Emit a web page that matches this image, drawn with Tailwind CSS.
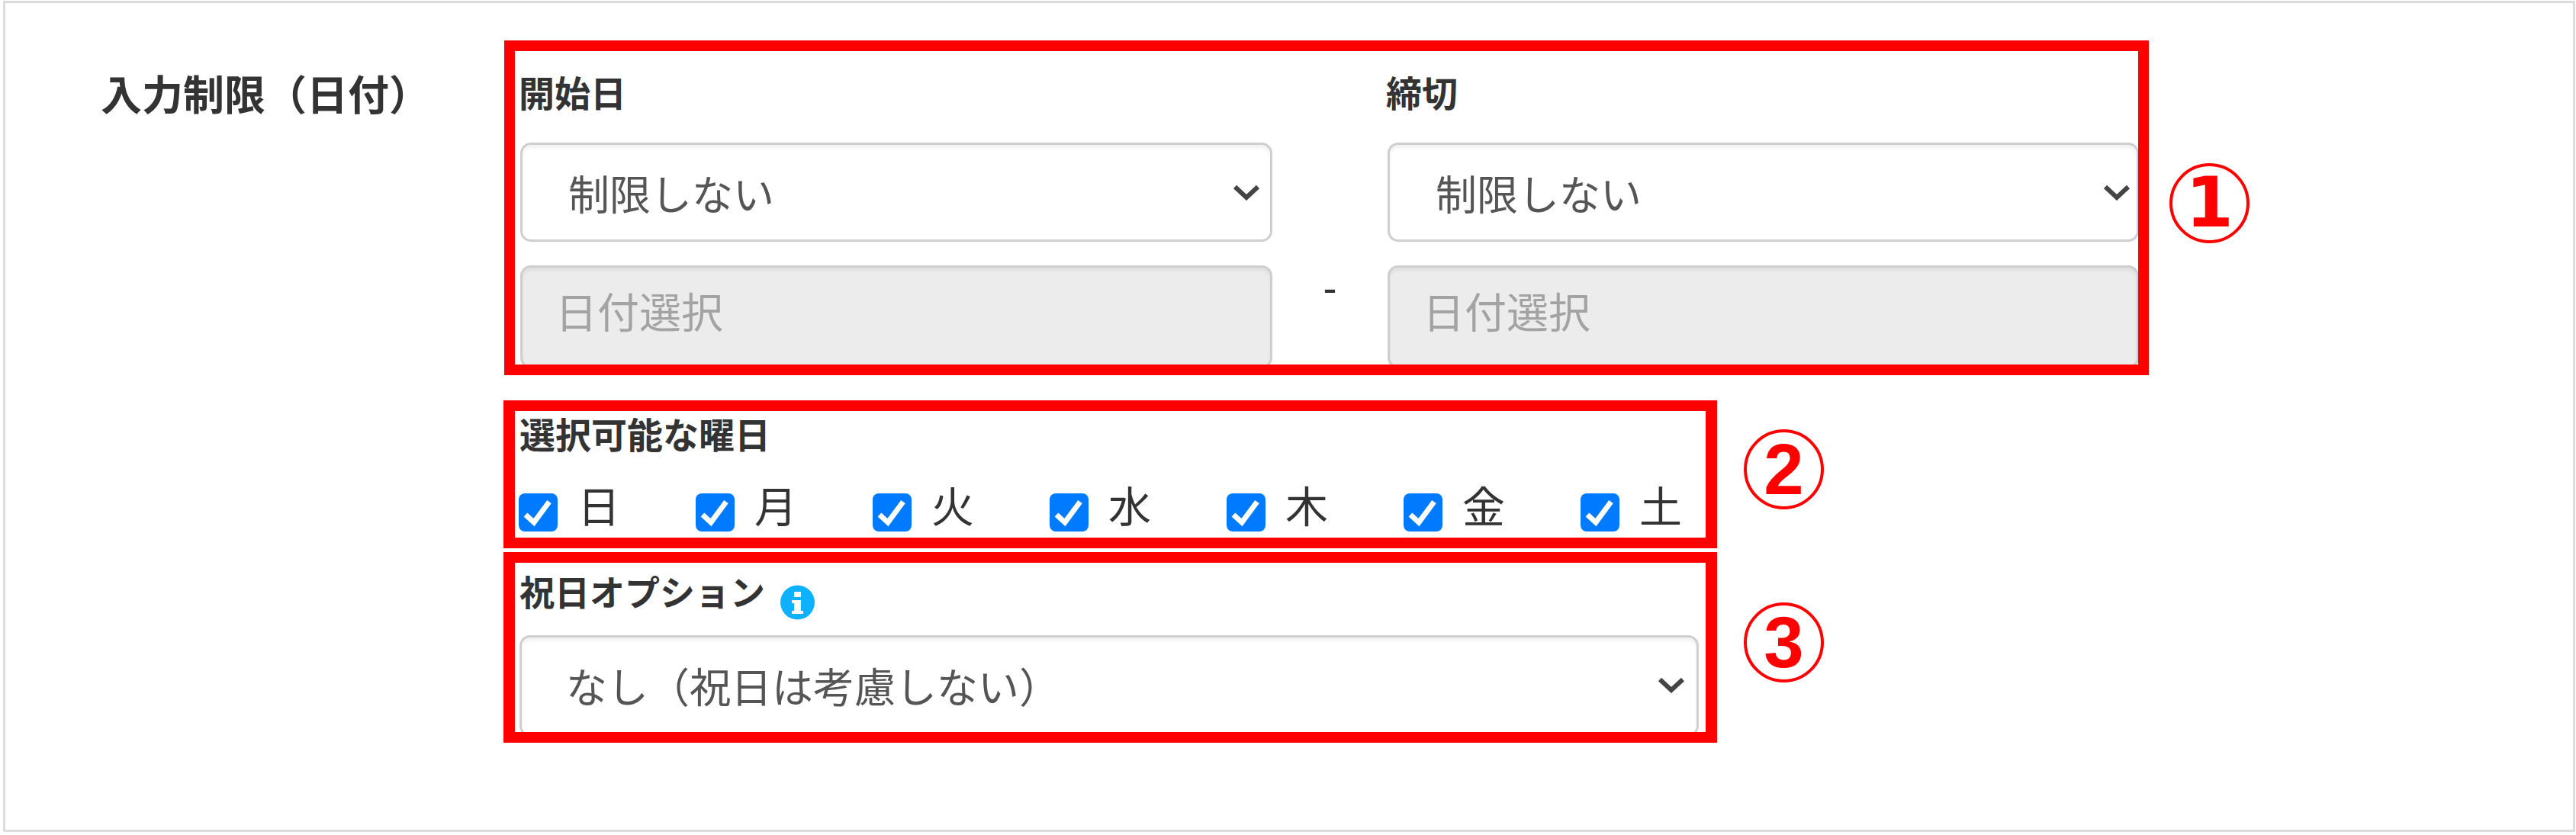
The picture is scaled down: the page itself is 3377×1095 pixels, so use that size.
<!DOCTYPE html>
<html lang="ja">
<head>
    <meta charset="UTF-8">
    <title>入力制限（日付）</title>
    <script src="https://cdn.jsdelivr.net/npm/@tailwindcss/browser@4"></script>
</head>
<body class="bg-white font-['Noto_Sans_CJK_JP',sans-serif] text-[#333]">
    <div class="mt-px ml-1 w-[3372px] h-[1090px] border-[3px] border-[#dcdcdc] flex">
        <!-- Field name -->
        <div class="w-[653px] pl-[125px] pt-[91px] text-[54px] leading-none font-bold shrink-0">入力制限（日付）</div>

        <div class="pt-[49px]">
            <!-- Block 1: start / end -->
            <div class="flex items-center gap-[27px] ml-px">
                <div class="w-[2156px] h-[439px] border-[14px] border-[#f00] overflow-hidden pl-[7px] grid grid-cols-[986px_151px_985px]">
                    <div>
                        <div class="pt-[29px] -ml-[2px] text-[47px] leading-none font-bold">開始日</div>
                        <div class="relative mt-[44px]">
                            <select class="appearance-none w-full h-[130px] pl-[60px] border-[3px] border-[#cfcfcf] rounded-[14px] bg-white text-[54px] text-[#555] shadow-[inset_0_4px_4px_rgba(0,0,0,0.06)]">
                                <option>制限しない</option>
                            </select>
                            <svg class="absolute top-[55px] right-[16px]" width="36" height="21" viewBox="0 0 36 21" fill="none" stroke="#444" stroke-width="6"><path d="M3 3l15 14L33 3"/></svg>
                        </div>
                        <input disabled placeholder="日付選択" class="mt-[31px] w-full h-[135px] pl-[43px] pb-[20px] border-[3px] border-[#cfcfcf] rounded-[14px] bg-[#ececec] text-[55px] placeholder:text-[#a3a3a3] shadow-[inset_0_4px_4px_rgba(0,0,0,0.06)]">
                    </div>
                    <div class="pt-[283px] text-center text-[54px] leading-none font-['Liberation_Sans',sans-serif] text-[#333]">-</div>
                    <div>
                        <div class="pt-[29px] -ml-[2px] text-[47px] leading-none font-bold">締切</div>
                        <div class="relative mt-[44px]">
                            <select class="appearance-none w-full h-[130px] pl-[60px] border-[3px] border-[#cfcfcf] rounded-[14px] bg-white text-[54px] text-[#555] shadow-[inset_0_4px_4px_rgba(0,0,0,0.06)]">
                                <option>制限しない</option>
                            </select>
                            <svg class="absolute top-[55px] right-[11px]" width="36" height="21" viewBox="0 0 36 21" fill="none" stroke="#444" stroke-width="6"><path d="M3 3l15 14L33 3"/></svg>
                        </div>
                        <input disabled placeholder="日付選択" class="mt-[31px] w-full h-[135px] pl-[43px] pb-[20px] border-[3px] border-[#cfcfcf] rounded-[14px] bg-[#ececec] text-[55px] placeholder:text-[#a3a3a3] shadow-[inset_0_4px_4px_rgba(0,0,0,0.06)]">
                    </div>
                </div>
                <div class="w-[105px] h-[105px] mb-[13px] rounded-full border-[4px] border-[#f00] flex items-center justify-center text-[#f00] text-[90px] leading-none font-bold font-['DejaVu_Sans',sans-serif]">1</div>
            </div>

            <!-- Block 2: weekdays -->
            <div class="flex items-center gap-[35px] mt-[33px]">
                <div class="w-[1591px] h-[194px] border-[14px] border-x-[15px] border-[#f00] overflow-hidden pl-[5px]">
                    <div class="pt-[5px] pl-px text-[47px] leading-none font-bold">選択可能な曜日</div>
                    <div class="mt-[42px] flex gap-[99px] text-[56px] leading-none">
                        <label class="flex gap-[26px]"><svg class="mt-[14px] shrink-0" width="51" height="50" viewBox="0 0 51 50"><rect width="51" height="50" rx="8" fill="#007bff"/><path d="M9 28l11 10 20-27" fill="none" stroke="#fff" stroke-width="7"/></svg>日</label>
                        <label class="flex gap-[26px]"><svg class="mt-[14px] shrink-0" width="51" height="50" viewBox="0 0 51 50"><rect width="51" height="50" rx="8" fill="#007bff"/><path d="M9 28l11 10 20-27" fill="none" stroke="#fff" stroke-width="7"/></svg>月</label>
                        <label class="flex gap-[26px]"><svg class="mt-[14px] shrink-0" width="51" height="50" viewBox="0 0 51 50"><rect width="51" height="50" rx="8" fill="#007bff"/><path d="M9 28l11 10 20-27" fill="none" stroke="#fff" stroke-width="7"/></svg>火</label>
                        <label class="flex gap-[26px]"><svg class="mt-[14px] shrink-0" width="51" height="50" viewBox="0 0 51 50"><rect width="51" height="50" rx="8" fill="#007bff"/><path d="M9 28l11 10 20-27" fill="none" stroke="#fff" stroke-width="7"/></svg>水</label>
                        <label class="flex gap-[26px]"><svg class="mt-[14px] shrink-0" width="51" height="50" viewBox="0 0 51 50"><rect width="51" height="50" rx="8" fill="#007bff"/><path d="M9 28l11 10 20-27" fill="none" stroke="#fff" stroke-width="7"/></svg>木</label>
                        <label class="flex gap-[26px]"><svg class="mt-[14px] shrink-0" width="51" height="50" viewBox="0 0 51 50"><rect width="51" height="50" rx="8" fill="#007bff"/><path d="M9 28l11 10 20-27" fill="none" stroke="#fff" stroke-width="7"/></svg>金</label>
                        <label class="flex gap-[26px]"><svg class="mt-[14px] shrink-0" width="51" height="50" viewBox="0 0 51 50"><rect width="51" height="50" rx="8" fill="#007bff"/><path d="M9 28l11 10 20-27" fill="none" stroke="#fff" stroke-width="7"/></svg>土</label>
                    </div>
                </div>
                <div class="w-[105px] h-[105px] mb-[13px] rounded-full border-[4px] border-[#f00] flex items-center justify-center text-[#f00] text-[94px] leading-none font-bold font-['Liberation_Sans',sans-serif]">2</div>
            </div>

            <!-- Block 3: holiday option -->
            <div class="flex items-center gap-[35px] mt-[5px]">
                <div class="w-[1591px] h-[250px] border-[14px] border-x-[15px] border-[#f00] overflow-hidden pl-[6px]">
                    <div class="pt-[13px] flex text-[46px] leading-none font-bold">
                        祝日オプション
                        <svg class="ml-[20px] mt-[16px]" width="45" height="46" viewBox="0 0 45 46">
                            <circle cx="22.5" cy="23" r="22.5" fill="#0cb2ff"/>
                            <rect x="18" y="9" width="9" height="7" fill="#fff"/>
                            <path d="M15 20h12v14h3v4H15v-4h3v-10h-3z" fill="#fff"/>
                        </svg>
                    </div>
                    <div class="relative w-[1546px] mt-[20px]">
                        <select class="appearance-none w-full h-[133px] pl-[58px] pb-[3px] border-[3px] border-[#cfcfcf] rounded-[14px] bg-white text-[54px] text-[#555] shadow-[inset_0_4px_4px_rgba(0,0,0,0.06)]">
                            <option>なし（祝日は考慮しない）</option>
                        </select>
                        <svg class="absolute top-[55px] right-[18px]" width="36" height="21" viewBox="0 0 36 21" fill="none" stroke="#444" stroke-width="6"><path d="M3 3l15 14L33 3"/></svg>
                    </div>
                </div>
                <div class="w-[105px] h-[105px] mb-[13px] rounded-full border-[4px] border-[#f00] flex items-center justify-center text-[#f00] text-[94px] leading-none font-bold font-['Liberation_Sans',sans-serif]">3</div>
            </div>
        </div>
    </div>
</body>
</html>
